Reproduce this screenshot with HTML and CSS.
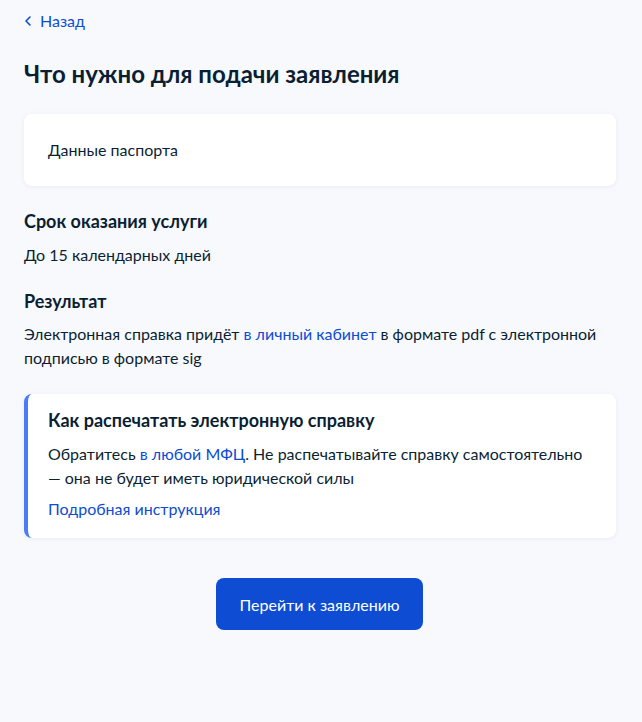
FILE: index.html
```
<!DOCTYPE html>
<html lang="ru">
<head>
<meta charset="utf-8">
<link rel="stylesheet" href="styles.css">
</head>
<body>
<main class="page">
  <a class="back" href="#">
    <svg class="back-icon" width="8" height="12" viewBox="0 0 8 12"><path d="M6 2 L2 6 L6 10" fill="none" stroke="#0d4cd3" stroke-width="1.6" stroke-linecap="round" stroke-linejoin="round"/></svg>
    <span>Назад</span>
  </a>
  <h1 class="title">Что нужно для подачи заявления</h1>
  <div class="card">Данные паспорта</div>
  <h2 class="subtitle">Срок оказания услуги</h2>
  <p class="text">До 15 календарных дней</p>
  <h2 class="subtitle subtitle-next">Результат</h2>
  <p class="text text-result">Электронная справка придёт <a class="link" href="#">в личный кабинет</a> в формате pdf с электронной подписью в формате sig</p>
  <div class="note">
    <h3 class="note-title">Как распечатать электронную справку</h3>
    <p class="text">Обратитесь <a class="link" href="#">в любой МФЦ</a>. Не распечатывайте справку самостоятельно — она не будет иметь юридической силы</p>
    <a class="link note-link" href="#">Подробная инструкция</a>
  </div>
  <div class="actions">
    <button class="btn">Перейти к заявлению</button>
  </div>
</main>
</body>
</html>
```
FILE: styles.css
```
html, body { margin: 0; padding: 0; }
body {
  background: #f8f9fd;
  font-family: Lato, "Noto Sans", sans-serif;
  color: #0b1f33;
  width: 642px;
  height: 722px;
}
.page { padding: 10px 26px 0 24px; }
.back {
  display: inline-flex; align-items: center; gap: 8px;
  color: #0d4cd3; text-decoration: none; font-size: 16px; line-height: 22px;
}
.back-icon { display: block; }
.title {
  margin: 27px 0 0; font-size: 24px; line-height: 30px; font-weight: 700; color: #0b1f33;
}
.card {
  margin-top: 25px; background: #fff; border-radius: 8px;
  padding: 24px 24px; font-size: 16px; line-height: 24px;
  box-shadow: 0 1px 4px rgba(226, 232, 245, 0.8);
}
.subtitle { margin: 22px 0 0; font-size: 18px; line-height: 26px; font-weight: 700; }
.subtitle-next { margin-top: 21px; }
.text { margin: 9px 0 0; font-size: 16px; line-height: 24px; }
.text-result { margin-top: 8px; }
.link { color: #0d4cd3; text-decoration: none; }
.note {
  margin-top: 24px; background: #fff; border-radius: 8px;
  border-left: 4px solid #4b7bf5;
  padding: 13px 24px 17px 20px;
  box-shadow: 0 1px 4px rgba(226, 232, 245, 0.8);
}
.note-title { margin: 0; font-size: 18px; line-height: 26px; font-weight: 700; }
.note .text { margin-top: 9px; }
.note-link { display: block; margin-top: 7px; font-size: 16px; line-height: 24px; }
.actions { display: flex; justify-content: center; margin-top: 40px; }
.btn {
  width: 207px; height: 52px; border: 0; border-radius: 8px;
  background: #0d4cd3; color: #fff; font-family: Lato, sans-serif; font-size: 16px;
  margin-left: -1px;
}
```
